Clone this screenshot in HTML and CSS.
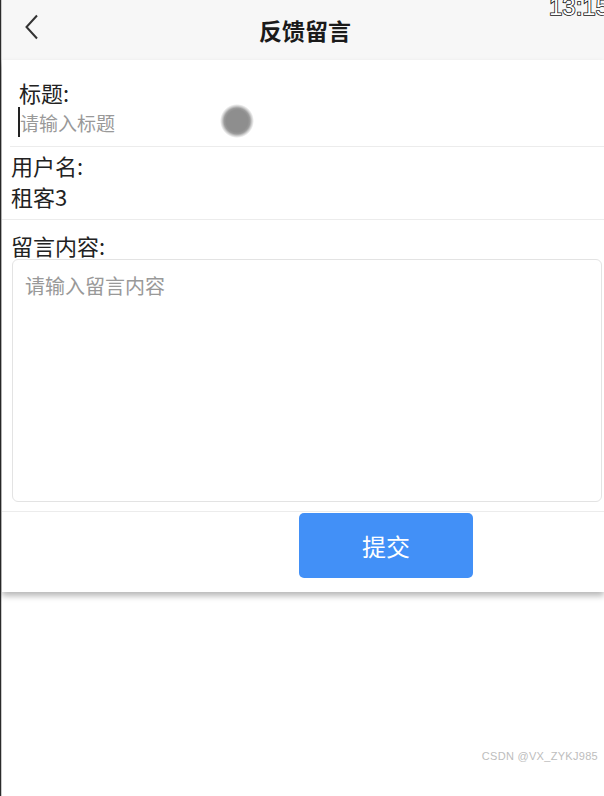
FILE: index.html
```html
<!DOCTYPE html>
<html lang="zh-CN">
<head>
<meta charset="utf-8">
<title>反馈留言</title>
<link rel="stylesheet" href="styles.css">
</head>
<body>
<div class="page">
  <header class="nav">
    <svg class="back" width="16" height="26" viewBox="0 0 16 26"><path d="M13 1.5 L2.5 13 L13 24.5" fill="none" stroke="#333" stroke-width="2"/></svg>
    <h1 class="nav-title">反馈留言</h1>
  </header>
  <main class="card">
    <section class="field field-title">
      <div class="label label-title">标题:</div>
      <div class="input-row"><span class="caret"></span><input class="input" type="text" placeholder="请输入标题"></div>
    </section>
    <section class="field field-user">
      <div class="label">用户名:</div>
      <div class="value">租客3</div>
    </section>
    <section class="field field-content">
      <div class="label label-content">留言内容:</div>
      <textarea class="textarea" placeholder="请输入留言内容"></textarea>
    </section>
    <div class="actions">
      <button class="submit" type="button">提交</button>
    </div>
  </main>
  <div class="touch"></div>
  <div class="clock">13:15</div>
  <div class="watermark">CSDN @VX_ZYKJ985</div>
</div>
</body>
</html>
```

FILE: styles.css
```css
* { box-sizing: border-box; }
html, body { margin: 0; padding: 0; background: #fff; }
body {
  font-family: "Noto Sans CJK SC", "Noto Sans", sans-serif;
  color: #222;
  overflow: hidden;
}
.page {
  position: relative;
  min-height: 796px;
  border-left: 1px solid #2b2b2b;
  box-shadow: inset 1px 0 0 #c9c9c9;
  padding-left: 1px;
}
.nav {
  position: relative;
  height: 60px;
  background: #f7f7f7;
  display: flex;
  align-items: center;
  justify-content: center;
}
.back {
  position: absolute;
  left: 22px;
  top: 14px;
}
.nav-title {
  margin: 0 0 0 4px;
  font-size: 23px;
  font-weight: bold;
  color: #1a1a1a;
  line-height: 30px;
}
.card {
  background: #fff;
  box-shadow: 0 4px 6px rgba(0, 0, 0, 0.28);
  position: relative;
  z-index: 1;
}
.field { display: flex; flex-direction: column; }
.label {
  font-size: 22px;
  line-height: 30px;
  color: #222;
}
.field-title {
  padding: 17px 0 9px 8px;
  margin-left: 8px;
  border-bottom: 1px solid #ececec;
}
.label-title { margin-left: 1px; }
.input-row {
  display: flex;
  align-items: center;
  height: 30px;
}
.caret {
  width: 2px;
  height: 30px;
  background: #222;
  flex: none;
}
.input {
  border: none;
  outline: none;
  padding: 0;
  margin: 0;
  height: 30px;
  font-family: "Noto Sans CJK SC", sans-serif;
  font-size: 19px;
  background: transparent;
  flex: 1;
}
.input::placeholder { color: #999; }
.field-user {
  padding: 3px 0 7px 9px;
  border-bottom: 1px solid #ececec;
}
.value {
  font-size: 22px;
  line-height: 32px;
  color: #222;
}
.field-content {
  padding: 11px 2px 9px 10px;
  border-bottom: 1px solid #ececec;
}
.label-content { line-height: 28px; margin-left: -1px; }
.textarea {
  display: block;
  width: 100%;
  height: 243px;
  border: 1px solid #e3e3e3;
  border-radius: 6px;
  padding: 12px 12px;
  resize: none;
  outline: none;
  font-family: "Noto Sans CJK SC", sans-serif;
  font-size: 20px;
  line-height: 28px;
  color: #222;
}
.textarea::placeholder { color: #999; }
.actions {
  display: flex;
  padding: 1px 0 14px 297px;
}
.submit {
  width: 174px;
  height: 65px;
  border: none;
  border-radius: 5px;
  background: #4290f7;
  color: #fff;
  font-family: "Noto Sans CJK SC", sans-serif;
  font-size: 24px;
  padding: 0;
}
.touch {
  position: absolute;
  left: 219px;
  top: 104px;
  width: 34px;
  height: 34px;
  border-radius: 50%;
  background: radial-gradient(circle, #8e8e8e 0 11px, #9c9c9c 13px, rgba(180,180,180,0.6) 15px, rgba(255,255,255,0) 17px);
  z-index: 2;
}
.clock {
  position: absolute;
  right: -5px;
  top: -5px;
  font-family: "Liberation Sans", sans-serif;
  font-size: 24px;
  line-height: 24px;
  color: #fff;
  -webkit-text-stroke: 1.6px #111;
  paint-order: stroke fill;
  z-index: 3;
}
.watermark {
  position: absolute;
  right: 6px;
  top: 750px;
  font-family: "Liberation Sans", sans-serif;
  font-size: 11px;
  color: #bdbdbd;
  letter-spacing: 0.3px;
}
```
